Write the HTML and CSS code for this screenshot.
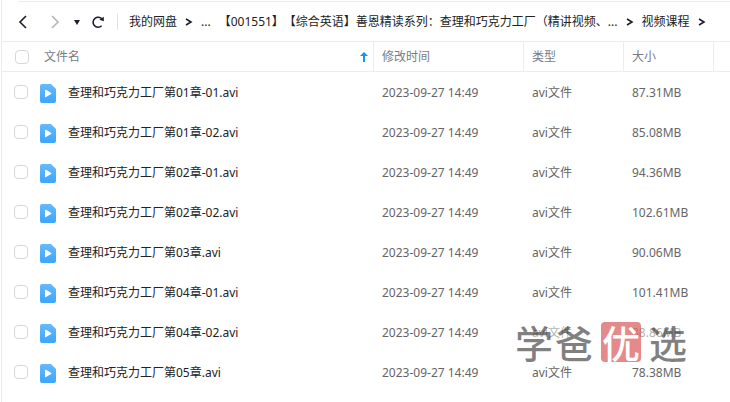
FILE: index.html
```html
<!DOCTYPE html>
<html lang="zh-CN">
<head>
    <meta charset="UTF-8">
    <meta name="viewport" content="width=device-width, initial-scale=1.0">
    <title>我的网盘</title>
    <link rel="stylesheet" href="styles.css">
</head>
<body>
    <div class="container">
        <!-- Navigation buttons and path -->
        <header class="toolbar">
            <button type="button" class="nav-button" aria-label="后退">
                <svg width="10" height="16" viewBox="0 0 10 16"><path d="M8 2 L2 8 L8 14"/></svg>
            </button>
            <button type="button" class="nav-button forward" aria-label="前进" disabled>
                <svg width="10" height="16" viewBox="0 0 10 16"><path d="M2 2 L8 8 L2 14"/></svg>
            </button>
            <button type="button" class="nav-button history" aria-label="历史">
                <svg width="8" height="8" viewBox="0 0 8 8"><path class="solid" d="M1 2 H7 L4 7 Z"/></svg>
            </button>
            <button type="button" class="nav-button refresh" aria-label="刷新">
                <svg width="14" height="14" viewBox="0 0 14 14">
                    <path d="M10.6 10.8 A5 5 0 1 1 11.2 4.4"/>
                    <path class="solid" d="M8.4 4.8 L12.8 1.8 V6.2 Z"/>
                </svg>
            </button>
            <nav class="path">
                <a href="#">我的网盘</a>
                <svg class="arrow" width="8" height="10" viewBox="0 0 8 10"><path d="M1 2 L6 5 L1 8"/></svg>
                <a href="#">...</a>
                <a href="#" class="folder">【001551】【综合英语】善恩精读系列：查理和巧克力工厂（精讲视频、...</a>
                <svg class="arrow" width="8" height="10" viewBox="0 0 8 10"><path d="M1 2 L6 5 L1 8"/></svg>
                <a href="#">视频课程</a>
                <svg class="arrow" width="8" height="10" viewBox="0 0 8 10"><path d="M1 2 L6 5 L1 8"/></svg>
            </nav>
        </header>

        <svg width="0" height="0" class="symbols">
            <defs>
                <linearGradient id="blue" x1="0" y1="0" x2="0" y2="1">
                    <stop offset="0" stop-color="#66b8ff"/>
                    <stop offset="1" stop-color="#3ca5fb"/>
                </linearGradient>
            </defs>
            <symbol id="video" viewBox="0 0 16 19">
                <path fill="url(#blue)" d="M2 0 H11 L16 5 V17 Q16 19 14 19 H2 Q0 19 0 17 V2 Q0 0 2 0 Z"/>
                <path fill="#fff" d="M5 6.3 Q5 5.3 6 5.8 L11.2 9 Q11.9 9.5 11.2 10 L6 13.1 Q5 13.6 5 12.6 Z"/>
            </symbol>
        </svg>

        <table class="files">
            <thead>
                <tr>
                    <th class="check"><input type="checkbox" aria-label="全选"></th>
                    <th class="name">
                        <div class="sort">
                            文件名
                            <svg width="8" height="10" viewBox="0 0 8 10"><path d="M4 0 L8 4 H5 V10 H3 V4 H0 Z"/></svg>
                        </div>
                    </th>
                    <th class="date">修改时间</th>
                    <th class="type">类型</th>
                    <th class="size">大小</th>
                    <th class="rest"></th>
                </tr>
            </thead>
            <tbody>
                <tr>
                    <td class="check"><input type="checkbox" id="file1"></td>
                    <td><label for="file1"><svg class="icon"><use href="#video"/></svg>查理和巧克力工厂第01章-01.avi</label></td>
                    <td>2023-09-27 14:49</td>
                    <td>avi文件</td>
                    <td>87.31MB</td>
                    <td></td>
                </tr>
                <tr>
                    <td class="check"><input type="checkbox" id="file2"></td>
                    <td><label for="file2"><svg class="icon"><use href="#video"/></svg>查理和巧克力工厂第01章-02.avi</label></td>
                    <td>2023-09-27 14:49</td>
                    <td>avi文件</td>
                    <td>85.08MB</td>
                    <td></td>
                </tr>
                <tr>
                    <td class="check"><input type="checkbox" id="file3"></td>
                    <td><label for="file3"><svg class="icon"><use href="#video"/></svg>查理和巧克力工厂第02章-01.avi</label></td>
                    <td>2023-09-27 14:49</td>
                    <td>avi文件</td>
                    <td>94.36MB</td>
                    <td></td>
                </tr>
                <tr>
                    <td class="check"><input type="checkbox" id="file4"></td>
                    <td><label for="file4"><svg class="icon"><use href="#video"/></svg>查理和巧克力工厂第02章-02.avi</label></td>
                    <td>2023-09-27 14:49</td>
                    <td>avi文件</td>
                    <td>102.61MB</td>
                    <td></td>
                </tr>
                <tr>
                    <td class="check"><input type="checkbox" id="file5"></td>
                    <td><label for="file5"><svg class="icon"><use href="#video"/></svg>查理和巧克力工厂第03章.avi</label></td>
                    <td>2023-09-27 14:49</td>
                    <td>avi文件</td>
                    <td>90.06MB</td>
                    <td></td>
                </tr>
                <tr>
                    <td class="check"><input type="checkbox" id="file6"></td>
                    <td><label for="file6"><svg class="icon"><use href="#video"/></svg>查理和巧克力工厂第04章-01.avi</label></td>
                    <td>2023-09-27 14:49</td>
                    <td>avi文件</td>
                    <td>101.41MB</td>
                    <td></td>
                </tr>
                <tr>
                    <td class="check"><input type="checkbox" id="file7"></td>
                    <td><label for="file7"><svg class="icon"><use href="#video"/></svg>查理和巧克力工厂第04章-02.avi</label></td>
                    <td>2023-09-27 14:49</td>
                    <td>avi文件</td>
                    <td>88.86MB</td>
                    <td></td>
                </tr>
                <tr>
                    <td class="check"><input type="checkbox" id="file8"></td>
                    <td><label for="file8"><svg class="icon"><use href="#video"/></svg>查理和巧克力工厂第05章.avi</label></td>
                    <td>2023-09-27 14:49</td>
                    <td>avi文件</td>
                    <td>78.38MB</td>
                    <td></td>
                </tr>
            </tbody>
        </table>

        <!-- Watermark over the last rows -->
        <div class="watermark">
            <span>学</span>
            <span>爸</span>
            <span class="seal">优</span>
            <span>选</span>
        </div>
    </div>
</body>
</html>
```
FILE: styles.css
```css
body {
    margin: 0;
    background: #fff;
    color: #333;
    font-family: "Noto Sans", "Noto Sans CJK SC", sans-serif;
    font-size: 12px;
    line-height: 20px;
    text-spacing-trim: space-all;
}

.container {
    position: relative;
    box-sizing: border-box;
    min-height: 100vh;
    margin-left: 1px;
    border-left: 1px solid #ededf0;
}

.toolbar {
    display: flex;
    align-items: center;
    height: 39px;
    border-top: 1px solid transparent;
    border-bottom: 1px solid #ededf0;
    background: linear-gradient(#ededf0, #ededf0) 16px 0 / 100% 1px no-repeat;
    padding: 1px 16px 0;
}

.nav-button {
    display: flex;
    margin: 0 22px 0 0;
    padding: 0;
    border: none;
    background: none;
    color: #1c1f2b;
}

.nav-button.forward {
    margin-right: 13px;
    color: #b4b6bc;
}

.nav-button.history {
    margin-right: 10px;
}

.nav-button.refresh {
    margin-right: 12px;
}

.nav-button path,
.arrow path {
    fill: none;
    stroke: currentColor;
    stroke-width: 1.6;
}

.nav-button .solid {
    fill: currentColor;
    stroke: none;
}

.path {
    display: flex;
    flex: 1;
    align-items: center;
    gap: 8px;
    min-width: 0;
    padding-left: 12px;
    white-space: nowrap;
    background: linear-gradient(#e0e1e5, #e0e1e5) 0 center / 1px 16px no-repeat;
}

.path a {
    color: #222;
    text-decoration: none;
}

.path .folder {
    overflow: hidden;
}

.arrow {
    flex: none;
    color: #1c1f2b;
}

.symbols {
    position: absolute;
}

.files {
    width: 100%;
    border-collapse: separate;
    border-spacing: 0;
    table-layout: fixed;
}

th,
td {
    box-sizing: border-box;
    padding: 0 0 0 8px;
    text-align: left;
    color: #666;
}

th {
    height: 30px;
    border-right: 1px solid #ededf0;
    border-bottom: 1px solid #ededf0;
    font-weight: normal;
    color: #777b85;
}

td {
    height: 40px;
    padding-top: 2px;
}

.check {
    width: 38px;
    padding: 0 0 0 12px;
    border-right: none;
}

th.check {
    padding-left: 13px;
}

th.name {
    padding-left: 4px;
}

.date {
    width: 150px;
}

.type {
    width: 100px;
}

.size {
    width: 90px;
}

.rest {
    width: 16px;
    border-right: none;
}

input[type="checkbox"] {
    display: block;
    box-sizing: border-box;
    width: 14px;
    height: 14px;
    margin: 0;
    appearance: none;
    border: 1px solid #d6d7da;
    border-radius: 4px;
    background: #fff;
}

.sort {
    display: flex;
    align-items: center;
    justify-content: space-between;
    padding-right: 5px;
}

.sort svg {
    fill: #1890ff;
}

label {
    display: flex;
    align-items: center;
    gap: 12px;
    margin-left: -8px;
    color: #222;
    white-space: nowrap;
}

.icon {
    width: 16px;
    height: 19px;
}

.watermark {
    position: absolute;
    right: 43px;
    bottom: 40px;
    display: flex;
    align-items: center;
    gap: 2px;
    background: rgba(255, 255, 255, 0.5);
    color: rgba(30, 30, 30, 0.56);
    font-family: "Noto Sans CJK SC", sans-serif;
    font-size: 38px;
    font-weight: 500;
    line-height: 40px;
    pointer-events: none;
}

.seal {
    width: 40px;
    margin: 0 6px;
    border-radius: 4px;
    background: rgba(210, 60, 60, 0.6);
    color: #fff;
    text-align: center;
}
```
